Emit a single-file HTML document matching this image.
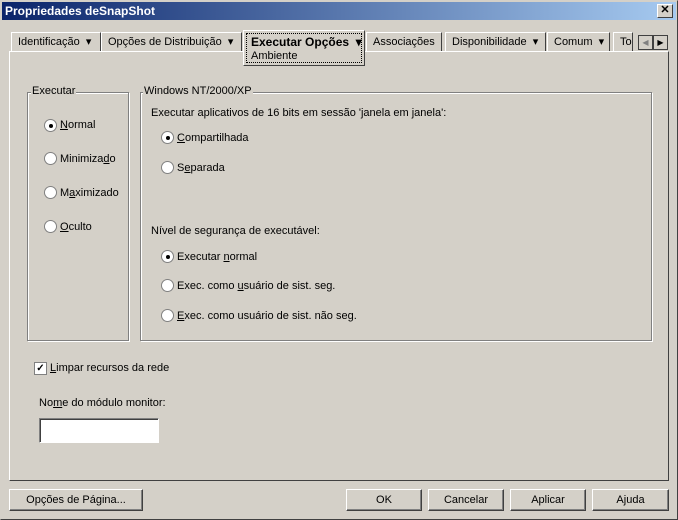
<!DOCTYPE html><html><head><style>
body{margin:0;width:678px;height:520px;background:#d4d0c8;font:11px "Liberation Sans",sans-serif;color:#000;position:relative;overflow:hidden}
.a{position:absolute;white-space:nowrap}
.win{position:absolute;left:0;top:0;width:676px;height:518px;border:1px solid;border-color:#d4d0c8 #404040 #404040 #d4d0c8}
.title{left:2px;top:2px;width:674px;height:18px;background:linear-gradient(90deg,#0a246a,#a6caf0);color:#fff;font-weight:bold;font-size:12px;line-height:18px;padding-left:3px;box-sizing:border-box}
.xb{left:657px;top:4px;width:14px;height:12px;background:#d4d0c8;border:1px solid;border-color:#fff #404040 #404040 #fff;font-size:11px;line-height:11px;text-align:center;font-weight:bold}
.tab{top:32px;height:19px;border:1px solid;border-color:#fff #404040 transparent #fff;border-bottom:none;line-height:18px;padding-left:6px;box-sizing:border-box}
.panel{left:9px;top:51px;width:660px;height:430px;border:1px solid;border-color:#fff #404040 #404040 #fff;box-sizing:border-box}
.grp{border:1px solid #808080;box-shadow:1px 1px 0 #fff inset,1px 1px 0 #fff}
.lg{background:#d4d0c8;padding:0 1px}
.r{width:11px;height:11px;border-radius:50%;background:#fff;box-shadow:0 0 0 1px #808080;border:0}
.r.on::after{content:"";position:absolute;left:4px;top:4px;width:4px;height:4px;border-radius:50%;background:#000}
.btn{height:22px;border:1px solid;border-color:#fff #404040 #404040 #fff;box-sizing:border-box;text-align:center;line-height:20px;box-shadow:-1px -1px 0 #808080 inset}
u{text-decoration:underline}
</style></head><body>
<div class="win"></div>
<div class="a title">Propriedades deSnapShot</div>
<div class="a xb">✕</div>
<div class="a panel"></div>
<div class="a tab" style="left:11px;width:90px">Identificação&nbsp; ▾</div>
<div class="a tab" style="left:101px;width:141px">Opções de Distribuição&nbsp; ▾</div>
<div class="a tab" style="left:366px;width:76px">Associações</div>
<div class="a tab" style="left:445px;width:101px">Disponibilidade&nbsp; ▾</div>
<div class="a tab" style="left:547px;width:63px">Comum&nbsp; ▾</div>
<div class="a tab" style="left:613px;width:20px;overflow:hidden">To</div>
<div class="a" style="left:243px;top:30px;width:122px;height:36px;background:#d4d0c8;border:1px solid;border-color:#fff #404040 #404040 #fff;box-sizing:border-box"></div>
<div class="a" style="left:246px;top:33px;width:116px;height:30px;border:1px dotted #000;box-sizing:border-box"></div>
<div class="a" style="left:251px;top:35px;font-weight:bold;font-size:12px">Executar Opções&nbsp; ▾</div>
<div class="a" style="left:251px;top:50px">Ambiente</div>
<div class="a" style="left:638px;top:35px;width:13px;height:13px;border:1px solid #404040;background:#d4d0c8;font-size:8px;line-height:13px;text-align:center;color:#808080">◀</div>
<div class="a" style="left:653px;top:35px;width:13px;height:13px;border:1px solid #404040;background:#d4d0c8;font-size:8px;line-height:13px;text-align:center">▶</div>

<div class="a grp" style="left:27px;top:92px;width:100px;height:247px"></div>
<div class="a lg" style="left:31px;top:85px">Executar</div>
<div class="a r on" style="left:45px;top:120px"></div><div class="a" style="left:60px;top:119px"><u>N</u>ormal</div>
<div class="a r" style="left:45px;top:153px"></div><div class="a" style="left:60px;top:153px">Minimiza<u>d</u>o</div>
<div class="a r" style="left:45px;top:187px"></div><div class="a" style="left:60px;top:187px">M<u>a</u>ximizado</div>
<div class="a r" style="left:45px;top:221px"></div><div class="a" style="left:60px;top:221px"><u>O</u>culto</div>

<div class="a grp" style="left:140px;top:92px;width:510px;height:247px"></div>
<div class="a lg" style="left:143px;top:85px">Windows NT/2000/XP</div>
<div class="a" style="left:151px;top:107px">Executar aplicativos de 16 bits em sessão 'janela em janela':</div>
<div class="a r on" style="left:162px;top:132px"></div><div class="a" style="left:177px;top:132px"><u>C</u>ompartilhada</div>
<div class="a r" style="left:162px;top:162px"></div><div class="a" style="left:177px;top:162px">S<u>e</u>parada</div>
<div class="a" style="left:151px;top:225px">Nível de segurança de executável:</div>
<div class="a r on" style="left:162px;top:251px"></div><div class="a" style="left:177px;top:251px">Executar <u>n</u>ormal</div>
<div class="a r" style="left:162px;top:280px"></div><div class="a" style="left:177px;top:280px">Exec. como <u>u</u>suário de sist. seg.</div>
<div class="a r" style="left:162px;top:310px"></div><div class="a" style="left:177px;top:310px"><u>E</u>xec. como usuário de sist. não seg.</div>

<div class="a" style="left:34px;top:362px;width:11px;height:11px;background:#fff;border:1px solid #808080;font-size:10px;line-height:11px;text-align:center;font-weight:bold">✓</div>
<div class="a" style="left:50px;top:362px"><u>L</u>impar recursos da rede</div>
<div class="a" style="left:39px;top:397px">No<u>m</u>e do módulo monitor:</div>
<div class="a" style="left:39px;top:418px;width:120px;height:25px;background:#fff;border:1px solid;border-color:#808080 #fff #fff #808080;box-sizing:border-box;box-shadow:1px 1px 0 #404040 inset"></div>

<div class="a btn" style="left:9px;top:489px;width:134px">Opções de Pá<u>g</u>ina...</div>
<div class="a btn" style="left:346px;top:489px;width:76px">OK</div>
<div class="a btn" style="left:428px;top:489px;width:76px">Cancelar</div>
<div class="a btn" style="left:510px;top:489px;width:76px">Aplicar</div>
<div class="a btn" style="left:592px;top:489px;width:77px">Ajuda</div>
</body></html>
